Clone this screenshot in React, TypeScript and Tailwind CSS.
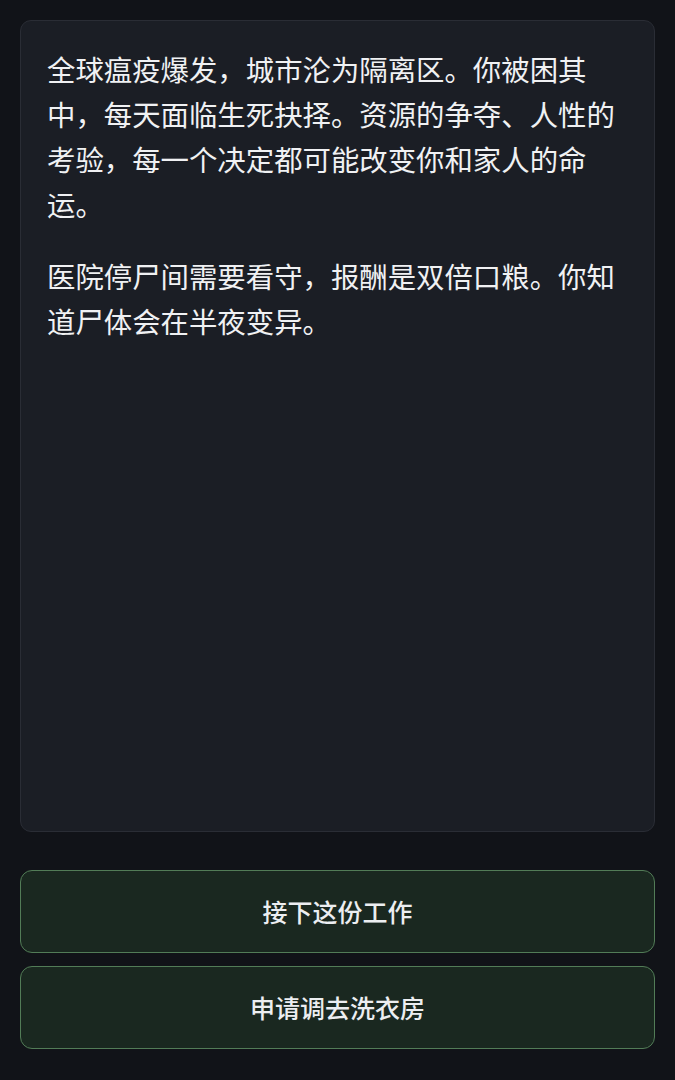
import React from "react";

export default function App() {
  return (
    <div
      className="min-h-screen w-full bg-[#111318] px-5 pt-5"
      style={{ fontFamily: '"Noto Sans CJK SC", "Noto Sans", sans-serif' }}
    >
      <div className="h-[812px] rounded-[11px] border border-[#2a2d35] bg-[#1b1e25] pl-[26px] pr-[24px] pt-[25px]">
        <p className="text-[28.4px] leading-[45px] text-[#f0f1f3]">
          全球瘟疫爆发，城市沦为隔离区。你被困其中，每天面临生死抉择。资源的争夺、人性的考验，每一个决定都可能改变你和家人的命运。
        </p>
        <p className="mt-[27px] text-[28.4px] leading-[45px] text-[#f0f1f3]">
          医院停尸间需要看守，报酬是双倍口粮。你知道尸体会在半夜变异。
        </p>
      </div>
      <div className="mt-[38px] flex flex-col gap-[13px]">
        <button className="flex h-[83px] w-full items-center justify-center rounded-[12px] border border-[#527c57] bg-[#1a2820] text-[25px] font-medium text-[#eceef1]">
          接下这份工作
        </button>
        <button className="flex h-[83px] w-full items-center justify-center rounded-[12px] border border-[#527c57] bg-[#1a2820] text-[25px] font-medium text-[#eceef1]">
          申请调去洗衣房
        </button>
      </div>
    </div>
  );
}
